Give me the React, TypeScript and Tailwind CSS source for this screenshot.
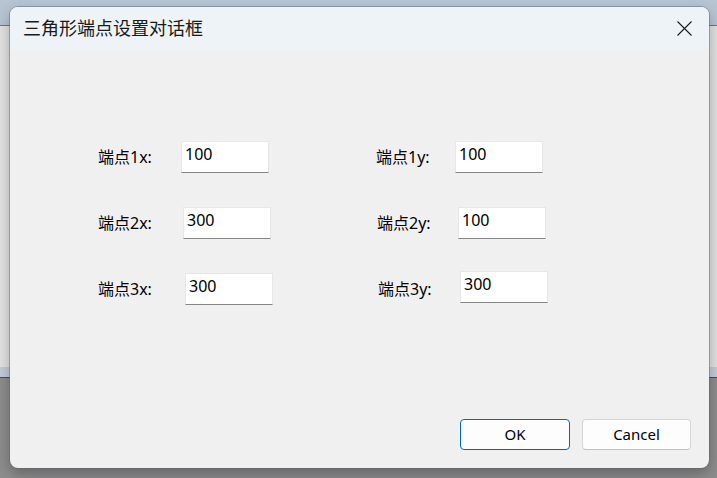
import React from 'react';

const FONT = { fontFamily: '"Noto Sans", "Noto Sans CJK SC", sans-serif' };

type FieldProps = {
  label: string;
  value: string;
  labelClass: string;
  inputClass?: string;
};

const Field = ({ label, value, labelClass, inputClass = '' }: FieldProps) => (
  <>
    <div className={`text-[16px] leading-[20px] text-black shrink-0 ${labelClass}`}>{label}</div>
    <div
      className={`w-[88px] h-[32px] shrink-0 bg-white border border-[#e6e6e6] border-b-[#868686] pl-[3px] pt-[1px] text-[16px] leading-[22px] text-black ${inputClass}`}
    >
      {value}
    </div>
  </>
);

const CloseIcon = () => (
  <svg width="15" height="15" viewBox="0 0 15 15" fill="none">
    <path d="M0.5 0.5L14.5 14.5M14.5 0.5L0.5 14.5" stroke="#1b1b1b" strokeWidth="1.1" />
  </svg>
);

const App = () => {
  return (
    <div className="relative w-[717px] h-[478px] overflow-hidden flex flex-col" style={FONT}>
      {/* window behind the dialog */}
      <div className="h-[25px] bg-[#b8c5d3]" />
      <div className="h-px bg-[#6f7782]" />
      <div className="h-[341px] bg-[#e4e4e4]" />
      <div className="h-[10px] bg-[#c3cfdc]" />
      <div className="h-px bg-[#4d4d4d]" />
      <div className="flex-1 bg-[#8e8e8e]" />

      {/* dialog */}
      <div className="absolute left-[10px] top-[7px] w-[699px] h-[461px] rounded-lg overflow-hidden flex flex-col bg-[#f0f0f0] shadow-[0_0_0_1px_rgba(90,100,110,0.45),0_6px_16px_rgba(0,0,0,0.3)]">
        <div className="h-[42px] shrink-0 flex items-center justify-between pl-[13px] pr-[17px] bg-[#edf3f6]">
          <span className="text-[18px] leading-[24px] text-[#1a1a1a]">三角形端点设置对话框</span>
          <CloseIcon />
        </div>

        <div className="flex-1 flex flex-col">
          <div className="mt-[92px] h-[32px] flex items-center">
            <Field label="端点1x:" value="100" labelClass="ml-[88px] w-[83px]" />
            <Field label="端点1y:" value="100" labelClass="ml-[107px] w-[79px]" />
          </div>
          <div className="mt-[34px] h-[32px] flex items-center">
            <Field label="端点2x:" value="300" labelClass="ml-[88px] w-[85px]" />
            <Field label="端点2y:" value="100" labelClass="ml-[106px] w-[81px]" />
          </div>
          <div className="mt-[34px] h-[32px] flex items-center">
            <Field label="端点3x:" value="300" labelClass="ml-[88px] w-[87px]" />
            <Field label="端点3y:" value="300" labelClass="ml-[105px] w-[82px]" inputClass="relative -top-[2px]" />
          </div>

          <div className="mt-auto flex justify-end gap-[12px] pr-[18px] pb-[18px]">
            <button className="w-[110px] h-[31px] rounded-[4px] border border-[#0067c0] bg-[#fdfdfd] text-[15px] text-black">
              OK
            </button>
            <button className="w-[109px] h-[31px] rounded-[4px] border border-[#d4d4d4] border-b-[#c2c2c2] bg-[#fdfdfd] text-[15px] text-black">
              Cancel
            </button>
          </div>
        </div>
      </div>
    </div>
  );
};

export default App;
